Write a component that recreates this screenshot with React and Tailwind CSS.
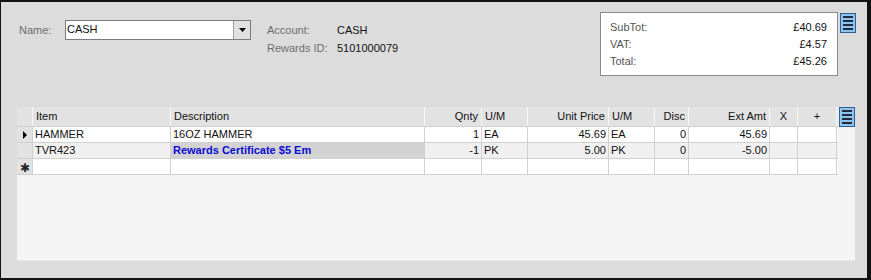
import React from "react";

const cols = [
  { label: "", w: "w-[16px]" },
  { label: "Item", w: "w-[138px]" },
  { label: "Description", w: "w-[254px]" },
  { label: "Qnty", w: "w-[57px]", right: true },
  { label: "U/M", w: "w-[46px]" },
  { label: "Unit Price", w: "w-[81px]", right: true },
  { label: "U/M", w: "w-[46px]" },
  { label: "Disc", w: "w-[34px]", right: true },
  { label: "Ext Amt", w: "w-[81px]", right: true },
  { label: "X", w: "w-[28px]", center: true },
  { label: "+", w: "w-[39px]", center: true },
];

const rows = [
  { marker: "arrow", bg: "bg-white", cells: ["HAMMER", "16OZ HAMMER", "1", "EA", "45.69", "EA", "0", "45.69", "", ""] },
  { marker: "", bg: "bg-[#f0f0f0]", cells: ["TVR423", "Rewards Certificate $5 Em", "-1", "PK", "5.00", "PK", "0", "-5.00", "", ""], hot: true },
  { marker: "star", bg: "bg-white", cells: ["", "", "", "", "", "", "", "", "", ""] },
];

const MenuIcon = () => (
  <div className="w-[16px] h-[20px] bg-[#8ec3f0] border border-[#2f5f8f] flex flex-col justify-center gap-[2px] px-[2px]">
    <div className="h-[2px] bg-[#1d2b3a]" />
    <div className="h-[2px] bg-[#1d2b3a]" />
    <div className="h-[2px] bg-[#1d2b3a]" />
    <div className="h-[2px] bg-[#1d2b3a]" />
  </div>
);

const Marker = ({ type }) => {
  if (type === "arrow")
    return (
      <svg width="6" height="8" viewBox="0 0 6 8">
        <path d="M1 0 L5 4 L1 8 Z" fill="#000" />
      </svg>
    );
  if (type === "star")
    return <span className="text-[12px] leading-none text-[#222] mt-[2px]">✱</span>;
  return null;
};

export default function App() {
  return (
    <div
      className="w-[871px] h-[280px] flex flex-col bg-[#dcdcdc] border-l border-t-2 border-r-4 border-b-2 border-[#111] text-[11px] text-[#111] overflow-hidden"
      style={{ fontFamily: '"Liberation Sans", Arial, sans-serif' }}
    >
      {/* header section */}
      <div className="flex h-[105px] shrink-0">
        <div className="flex items-start pt-[18px] pl-[18px]">
          <span className="text-[#6d6d6d] leading-[20px] w-[46px]">Name:</span>
          <div className="flex w-[186px] h-[20px] border border-[#7a7a7a] bg-white">
            <span className="flex-1 pl-[1px] leading-[16px]">CASH</span>
            <div className="w-[17px] border-l border-[#a0a0a0] bg-[#e1e1e1] flex items-center justify-center">
              <svg width="7" height="4" viewBox="0 0 7 4">
                <path d="M0 0 H7 L3.5 4 Z" fill="#000" />
              </svg>
            </div>
          </div>
          <div className="ml-[16px] mt-[1px] flex flex-col leading-[18px]">
            <div className="flex">
              <span className="w-[70px] text-[#6d6d6d]">Account:</span>
              <span>CASH</span>
            </div>
            <div className="flex">
              <span className="w-[70px] text-[#6d6d6d]">Rewards ID:</span>
              <span>5101000079</span>
            </div>
          </div>
        </div>
        <div className="ml-auto flex items-start pt-[10px] pr-[11px]">
          <div className="w-[238px] h-[64px] bg-white border border-[#8a8a8a] pl-[9px] pr-[10px] pt-[6px] flex flex-col leading-[17px]">
            <div className="flex justify-between">
              <span className="text-[#555]">SubTot:</span>
              <span>£40.69</span>
            </div>
            <div className="flex justify-between">
              <span className="text-[#555]">VAT:</span>
              <span>£4.57</span>
            </div>
            <div className="flex justify-between">
              <span className="text-[#555]">Total:</span>
              <span>£45.26</span>
            </div>
          </div>
          <div className="ml-[2px] mt-[1px]">
            <MenuIcon />
          </div>
        </div>
      </div>

      {/* grid */}
      <div className="ml-[16px] w-[838px] h-[154px] shrink-0 bg-[#f4f4f4] border-b border-[#e8e8e8] flex items-start">
        <div className="w-[821px]">
          <div className="flex h-[20px] bg-[#e2e2e2] border-b border-[#cfcfcf]">
            {cols.map((c, i) => (
              <div
                key={i}
                className={`${c.w} shrink-0 h-full px-[3px] flex items-center border-r border-[#f6f6f6] ${
                  c.right ? "justify-end" : c.center ? "justify-center" : ""
                }`}
              >
                {c.label}
              </div>
            ))}
          </div>
          {rows.map((r, ri) => (
            <div key={ri} className={`flex h-[16px] border-b border-[#d0d0d0] ${r.bg}`}>
              <div className="w-[16px] shrink-0 h-full bg-[#e2e2e2] border-r border-[#d0d0d0] flex items-center justify-center">
                <Marker type={r.marker} />
              </div>
              {r.cells.map((v, ci) => {
                const c = cols[ci + 1];
                const hot = r.hot && ci === 1;
                return (
                  <div
                    key={ci}
                    className={`${c.w} shrink-0 h-full px-[2px] flex items-center border-r border-[#d0d0d0] whitespace-nowrap overflow-hidden ${
                      c.right ? "justify-end" : ""
                    } ${hot ? "bg-[#d3d3d3] text-[#0a0ad0] font-bold" : ""}`}
                  >
                    {v}
                  </div>
                );
              })}
            </div>
          ))}
        </div>
        <div className="ml-[1px]">
          <MenuIcon />
        </div>
      </div>
      <div className="flex-1" />
    </div>
  );
}
